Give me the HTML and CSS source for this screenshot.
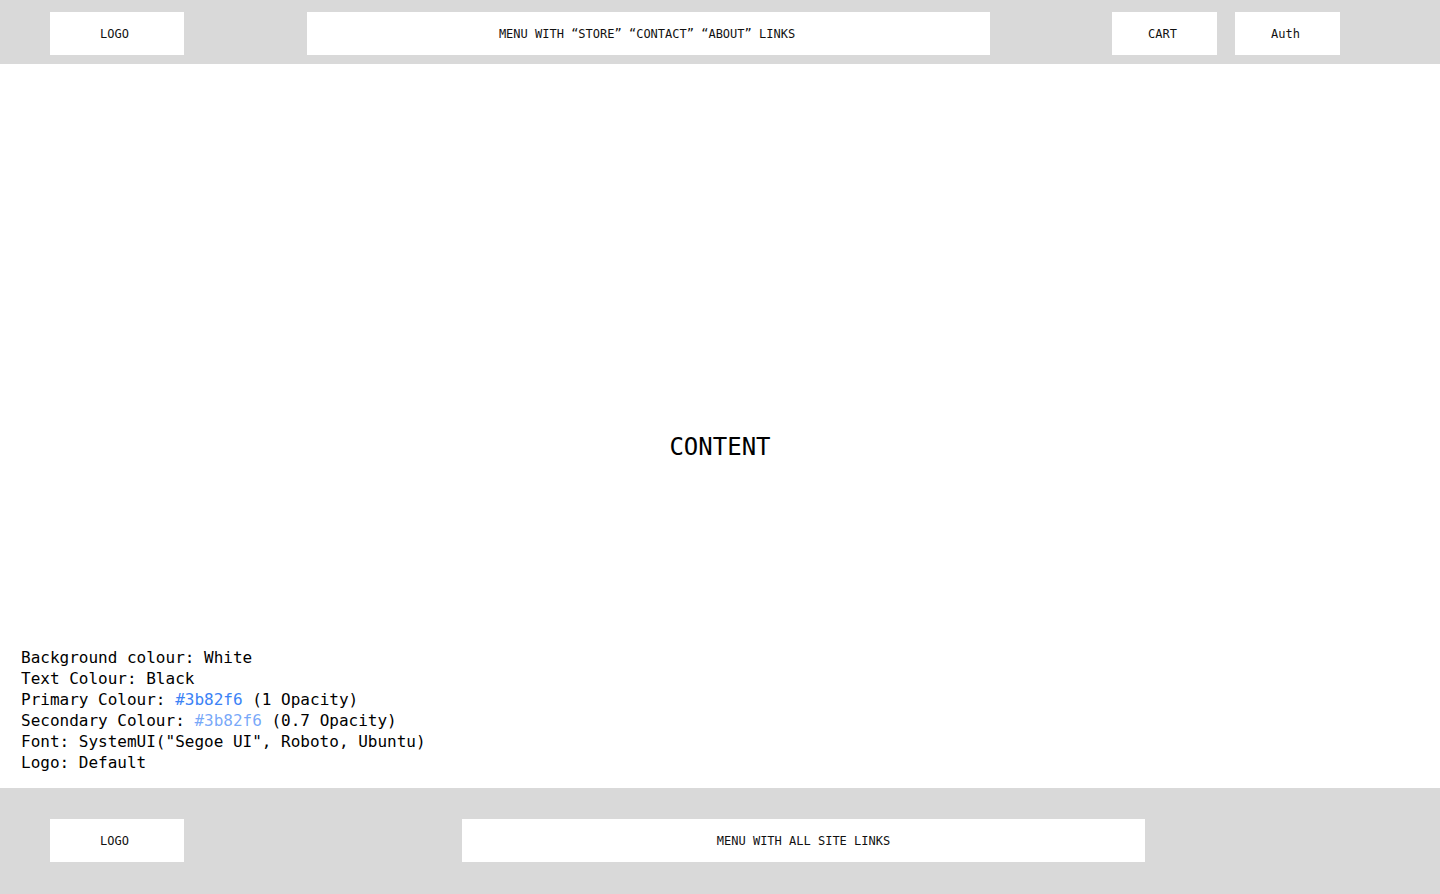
FILE: index.html
```html
<!DOCTYPE html>
<html lang="en">
<head>
<meta charset="utf-8">
<title>Wireframe</title>
<link rel="stylesheet" href="styles.css">
</head>
<body>
<div class="page">
  <header class="header">
    <div class="box logo">LOGO</div>
    <nav class="box menu">MENU WITH “STORE” “CONTACT” “ABOUT” LINKS</nav>
    <div class="actions">
      <div class="box small">CART</div>
      <div class="box small">Auth</div>
    </div>
  </header>
  <main class="main">
    <div class="content">CONTENT</div>
    <div class="notes">
      <div>Background colour: White</div>
      <div>Text Colour: Black</div>
      <div>Primary Colour: <span class="primary">#3b82f6</span> (1 Opacity)</div>
      <div>Secondary Colour: <span class="secondary">#3b82f6</span> (0.7 Opacity)</div>
      <div>Font: SystemUI("Segoe UI", Roboto, Ubuntu)</div>
      <div>Logo: Default</div>
    </div>
  </main>
  <footer class="footer">
    <div class="box logo">LOGO</div>
    <nav class="box menu footer-menu">MENU WITH ALL SITE LINKS</nav>
  </footer>
</div>
</body>
</html>
```

FILE: styles.css
```css
* { box-sizing: border-box; }
html, body {
  margin: 0;
  padding: 0;
  background: #ffffff;
  color: #000000;
  font-family: "DejaVu Sans Mono", "Liberation Mono", monospace;
}
.page {
  display: flex;
  flex-direction: column;
  height: 894px;
}
.header {
  height: 64px;
  background: #d9d9d9;
  display: flex;
  align-items: flex-start;
  justify-content: space-between;
  padding: 12px 100px 0 50px;
}
.box {
  background: #ffffff;
  height: 43px;
  display: flex;
  align-items: center;
  justify-content: center;
  font-size: 12px;
  color: #111;
}
.logo { width: 134px; padding-right: 5px; }
.menu { width: 683px; padding-right: 2px; }
.footer-menu { padding-right: 0; }
.actions {
  display: flex;
  gap: 18px;
}
.small { width: 105px; padding-right: 4px; }
.main {
  flex: 1;
  position: relative;
  display: flex;
  align-items: center;
  justify-content: center;
  padding-top: 42px;
}
.content {
  font-size: 24px;
  letter-spacing: 0;
}
.notes {
  position: absolute;
  left: 21px;
  bottom: 15px;
  font-size: 16px;
  line-height: 21px;
}
.primary { color: #3b82f6; }
.secondary { color: rgba(59, 130, 246, 0.7); }
.footer {
  height: 106px;
  background: #d9d9d9;
  display: flex;
  align-items: flex-start;
  padding: 31px 0 0 50px;
  gap: 278px;
}
```
